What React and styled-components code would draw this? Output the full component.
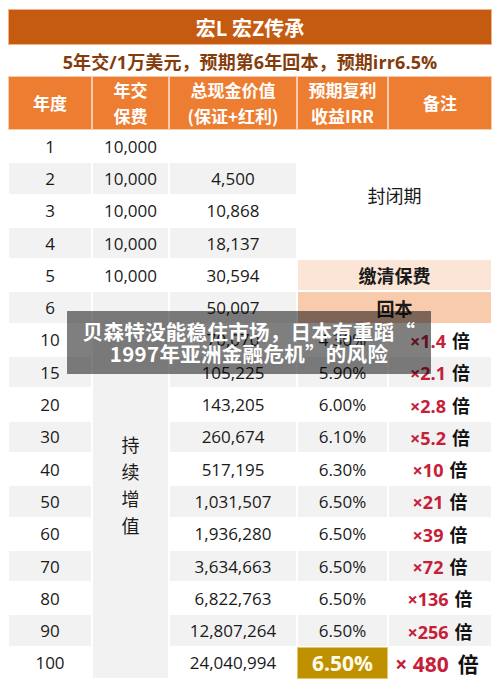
import styled, { createGlobalStyle } from 'styled-components';

const GlobalStyle = createGlobalStyle`
    body {
        margin: 0;
        background: #ffffff;
        font-family: "Open Sans", "Noto Sans CJK SC", sans-serif;
    }
`

const rows = [
    { year: '1', prem: '10,000', cv: '' },
    { year: '2', prem: '10,000', cv: '4,500' },
    { year: '3', prem: '10,000', cv: '10,868' },
    { year: '4', prem: '10,000', cv: '18,137' },
    { year: '5', prem: '10,000', cv: '30,594' },
    { year: '6', prem: '', cv: '50,007' },
    { year: '10', cv: '70,070', irr: '4.30%', mult: '1.4' },
    { year: '15', cv: '105,225', irr: '5.90%', mult: '2.1' },
    { year: '20', cv: '143,205', irr: '6.00%', mult: '2.8' },
    { year: '30', cv: '260,674', irr: '6.10%', mult: '5.2' },
    { year: '40', cv: '517,195', irr: '6.30%', mult: '10' },
    { year: '50', cv: '1,031,507', irr: '6.50%', mult: '21' },
    { year: '60', cv: '1,936,280', irr: '6.50%', mult: '39' },
    { year: '70', cv: '3,634,663', irr: '6.50%', mult: '72' },
    { year: '80', cv: '6,822,763', irr: '6.50%', mult: '136' },
    { year: '90', cv: '12,807,264', irr: '6.50%', mult: '256' },
    { year: '100', cv: '24,040,994', irr: '6.50%', mult: '480', last: true },
]

const GRAY = '#f2f2f2';
const WHITE = '#ffffff';

const App = () => {
    const bgFor = (i) => (i % 2 === 1 ? GRAY : WHITE);

    return (
        <Page>
            <GlobalStyle />
            <TitleBar>宏L 宏Z传承</TitleBar>
            <Subtitle>5年交/1万美元，预期第6年回本，预期irr6.5%</Subtitle>
            <Table>
                <HeadCell>年度</HeadCell>
                <HeadCell>年交<br />保费</HeadCell>
                <HeadCell>总现金价值<br />(保证+红利)</HeadCell>
                <HeadCell>预期复利<br />收益IRR</HeadCell>
                <HeadCell>备注</HeadCell>

                {rows.map((r, i) => {
                    const row = i + 2;
                    return [
                        <Cell key={`y${i}`} $row={row} $col="1" $bg={bgFor(i)}>{r.year}</Cell>,
                        i < 5 && (
                            <Cell key={`p${i}`} $row={row} $col="2" $bg={bgFor(i)}>{r.prem}</Cell>
                        ),
                        <Cell key={`c${i}`} $row={row} $col="3" $bg={bgFor(i)}>{r.cv}</Cell>,
                        r.irr && (r.last ? (
                            <GoldCell key={`i${i}`} $row={row} $col="4">{r.irr}</GoldCell>
                        ) : (
                            <Cell key={`i${i}`} $row={row} $col="4" $bg={bgFor(i)}>{r.irr}</Cell>
                        )),
                        r.mult && (
                            <Cell key={`m${i}`} $row={row} $col="5" $bg={bgFor(i)}>
                                <Mult $big={r.last}>
                                    <Times>×{r.last ? ' ' : ''}{r.mult}</Times>
                                    <Bei>倍</Bei>
                                </Mult>
                            </Cell>
                        ),
                    ];
                })}

                <Cell $row="2 / 6" $col="4 / 6" $bg={WHITE} $cjk>封闭期</Cell>
                <Cell $row="6" $col="4 / 6" $bg="#fbe5d6" $cjk $bold>缴清保费</Cell>
                <Cell $row="7" $col="4 / 6" $bg="#f8cbad" $cjk $bold>回本</Cell>
                <Cell $row="7 / 19" $col="2" $bg={GRAY} $cjk>
                    <Vertical>持续增值</Vertical>
                </Cell>
            </Table>
            <Caption>
                贝森特没能稳住市场，日本有重蹈“<br />
                1997年亚洲金融危机”的风险
            </Caption>
        </Page>
    )
}

export default App

const Page = styled.div`
    position: relative;
    width: 500px;
    height: 685px;
    box-sizing: border-box;
    padding: 10px 9px 0;
    background: #ffffff;
`
const TitleBar = styled.div`
    height: 34px;
    display: flex;
    align-items: center;
    justify-content: center;
    background: #c55a11;
    box-shadow: 0 0 0 1px #f4b183;
    color: #ffffff;
    font-family: "Noto Sans CJK SC", sans-serif;
    font-size: 20px;
    font-weight: 600;
`
const Subtitle = styled.div`
    height: 33px;
    display: flex;
    align-items: center;
    justify-content: center;
    color: #843c0c;
    font-family: "Open Sans", "Noto Sans CJK SC", sans-serif;
    font-size: 18px;
    font-weight: 700;
    letter-spacing: 0.1px;
`
const Table = styled.div`
    display: grid;
    grid-template-columns: 82px 75px 126px 89px 102px;
    grid-template-rows: 52px repeat(17, 30.3px);
    gap: 2px;
    background: #ffffff;
`
const HeadCell = styled.div`
    display: flex;
    align-items: center;
    justify-content: center;
    text-align: center;
    background: #ed7d31;
    color: #ffffff;
    font-family: "Noto Sans CJK SC", sans-serif;
    font-size: 17px;
    font-weight: 700;
    line-height: 26px;
    outline: 1px solid #f8cbad;
`
const Cell = styled.div`
    grid-row: ${props => props.$row};
    grid-column: ${props => props.$col};
    display: flex;
    align-items: center;
    justify-content: center;
    background: ${props => props.$bg};
    color: #1a1a1a;
    font-family: ${props => props.$cjk ? '"Noto Sans CJK SC", sans-serif' : '"Open Sans", "Noto Sans CJK SC", sans-serif'};
    font-size: ${props => props.$cjk ? '18px' : '17px'};
    font-weight: ${props => props.$bold ? 700 : 400};
`
const GoldCell = styled(Cell)`
    background: #bf9000;
    color: #fffbea;
    font-size: 21px;
    font-weight: 700;
    outline: 1px solid #e6c76a;
`
const Mult = styled.div`
    display: flex;
    align-items: baseline;
    gap: ${props => props.$big ? '9px' : '6px'};
    font-size: ${props => props.$big ? '21px' : '18px'};
    font-weight: 700;
    margin-left: ${props => props.$big ? '-6px' : '0'};
`
const Times = styled.span`
    color: #c62039;
    font-family: "Open Sans", sans-serif;
    white-space: pre;
`
const Bei = styled.span`
    color: #111111;
    font-family: "Noto Sans CJK SC", sans-serif;
`
const Vertical = styled.div`
    width: 1em;
    font-size: 18px;
    line-height: 27px;
    text-align: center;
    word-break: break-all;
`
const Caption = styled.div`
    position: absolute;
    left: 67px;
    top: 311px;
    width: 364px;
    height: 63px;
    box-sizing: border-box;
    padding-top: 9px;
    background: rgba(0, 0, 0, 0.5);
    color: #ffffff;
    font-family: "Noto Sans CJK SC", sans-serif;
    font-size: 20.5px;
    font-weight: 700;
    line-height: 22px;
    letter-spacing: 0.3px;
    text-align: center;
`
